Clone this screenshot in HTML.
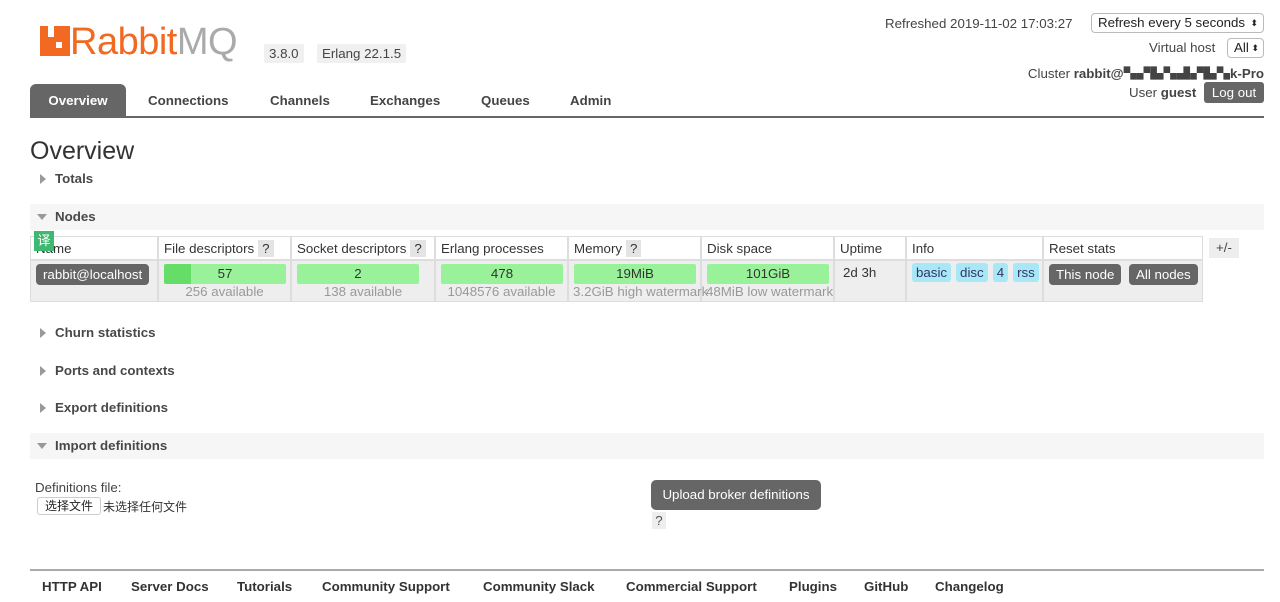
<!DOCTYPE html>
<html><head><meta charset="utf-8">
<style>
*{box-sizing:border-box;margin:0;padding:0}
body{width:1280px;height:602px;background:#fff;font-family:"Liberation Sans","Noto Sans CJK SC",sans-serif;font-size:13.3px;color:#444;position:relative;overflow:hidden}
.a{position:absolute;white-space:nowrap}
.b{font-weight:bold}
.tag{background:#f0f0f0;padding:2px 5px;border-radius:2px}
.tab{position:absolute;top:84px;height:33px;line-height:34px;font-weight:bold;color:#444}
.sec{position:absolute;left:30px;width:1234px;height:26px;line-height:26px;font-weight:bold;color:#484848;padding-left:25px}
.sec.open{background:#f6f6f6}
.tri{position:absolute;left:10px;top:8px;width:0;height:0;border-top:5px solid transparent;border-bottom:5px solid transparent;border-left:6px solid #999}
.open .tri{left:7px;top:10px;border-left:5px solid transparent;border-right:5px solid transparent;border-top:6px solid #999;border-bottom:0}
.th{position:absolute;top:236px;height:24px;line-height:24px;border:1px solid #ddd;padding-left:5px;background:#fff;color:#333;white-space:nowrap}
.td{position:absolute;top:260px;height:42px;border:1px solid #ddd;background:#eee}
.bar{position:absolute;top:3px;left:5px;height:20px;background:#99f299;text-align:center;line-height:20px;color:#333;border-radius:2px}
.sub{position:absolute;top:23px;left:0;right:0;text-align:center;color:#999;white-space:nowrap}
.q{background:#e4e4e4;padding:1px 4px;margin-left:4px}
.btn{background:#666;color:#fff;border-radius:4px;padding:3px 7px}
.pill{background:#a8e8f6;color:#336;border-radius:3px;padding:2px 4px;margin-right:5px}
</style></head><body>
<div class="a" style="left:40px;top:22px;font-size:38px;color:#f60;line-height:40px;font-family:'Liberation Sans',sans-serif;letter-spacing:-0.5px">
<span style="display:inline-block;width:30px;height:30px;background:#f26a22;vertical-align:-2px;position:relative"><span style="position:absolute;left:8px;top:0;width:6px;height:11px;background:#fff"></span><span style="position:absolute;left:16px;top:16px;width:6px;height:6px;background:#fff"></span></span><span style="color:#f26a22">Rabbit</span><span style="color:#a9aaa9">MQ</span></div>
<div class="a tag" style="left:264px;top:44px">3.8.0</div>
<div class="a tag" style="left:317px;top:44px">Erlang 22.1.5</div>

<div class="a" style="left:885px;top:16px">Refreshed 2019-11-02 17:03:27</div>
<div class="a" style="left:1091px;top:13px;width:173px;height:20px;border:1px solid #bbb;border-radius:4px;padding-left:6px;line-height:18px;color:#222">Refresh every 5 seconds<span style="position:absolute;right:5px;font-size:9px">⬍</span></div>
<div class="a" style="left:1149px;top:40px">Virtual host</div>
<div class="a" style="left:1227px;top:38px;width:37px;height:20px;border:1px solid #bbb;border-radius:4px;padding-left:6px;line-height:18px;color:#222">All<span style="position:absolute;right:4px;font-size:9px">⬍</span></div>
<div class="a" style="right:16px;top:63px">Cluster <b>rabbit@▚▞▙▚▟▞▙▚k-Pro</b></div>
<div class="a" style="left:1129px;top:85px">User <b>guest</b></div>
<div class="a" style="left:1204px;top:82px;width:60px;height:21px;background:#666;color:#fff;border-radius:3px;text-align:center;line-height:21px">Log out</div>

<div class="tab" style="left:30px;width:96px;background:#666;color:#fff;border-radius:6px 6px 0 0;text-align:center">Overview</div>
<div class="tab" style="left:148px">Connections</div>
<div class="tab" style="left:270px">Channels</div>
<div class="tab" style="left:370px">Exchanges</div>
<div class="tab" style="left:481px">Queues</div>
<div class="tab" style="left:570px">Admin</div>
<div class="a" style="left:30px;top:116px;width:1234px;height:2px;background:#666"></div>

<div class="a" style="left:30px;top:137px;font-size:25px;color:#333">Overview</div>
<div class="sec" style="top:166px"><span class="tri"></span>Totals</div>
<div class="sec open" style="top:204px"><span class="tri"></span>Nodes</div>

<div class="th" style="left:30px;width:128px">Name</div>
<div class="a" style="left:34px;top:231px;width:20px;height:20px;background:#3fb971;color:#fff;text-align:center;line-height:20px;font-size:13px">译</div>
<div class="th" style="left:158px;width:133px">File descriptors<span class="q">?</span></div>
<div class="th" style="left:291px;width:144px">Socket descriptors<span class="q">?</span></div>
<div class="th" style="left:435px;width:133px">Erlang processes</div>
<div class="th" style="left:568px;width:133px">Memory<span class="q">?</span></div>
<div class="th" style="left:701px;width:133px">Disk space</div>
<div class="th" style="left:834px;width:72px">Uptime</div>
<div class="th" style="left:906px;width:137px">Info</div>
<div class="th" style="left:1043px;width:160px">Reset stats</div>
<div class="a" style="left:1209px;top:238px;width:30px;height:20px;background:#eee;text-align:center;line-height:20px">+/-</div>

<div class="td" style="left:30px;width:128px"><span class="a btn" style="left:5px;top:3px">rabbit@localhost</span></div>
<div class="td" style="left:158px;width:133px"><div class="bar" style="width:122px;background:linear-gradient(90deg,#6d6 0 27px,#99f299 27px)">57</div><div class="sub">256 available</div></div>
<div class="td" style="left:291px;width:144px"><div class="bar" style="width:122px">2</div><div class="sub">138 available</div></div>
<div class="td" style="left:435px;width:133px"><div class="bar" style="width:122px">478</div><div class="sub">1048576 available</div></div>
<div class="td" style="left:568px;width:133px"><div class="bar" style="width:122px">19MiB</div></div>
<div class="td" style="left:701px;width:133px"><div class="bar" style="width:122px">101GiB</div></div>
<div class="a" style="top:284px;left:573px;color:#999;z-index:3">3.2GiB high watermark</div>
<div class="a" style="top:284px;left:706px;color:#999;z-index:3">48MiB low watermark</div>
<div class="td" style="left:834px;width:72px"><span class="a" style="left:8px;top:4px;color:#333">2d 3h</span></div>
<div class="td" style="left:906px;width:137px"><span class="a" style="left:5px;top:4px"><span class="pill">basic</span><span class="pill">disc</span><span class="pill">4</span><span class="pill">rss</span></span></div>
<div class="td" style="left:1043px;width:160px"><span class="a btn" style="left:5px;top:3px">This node</span><span class="a btn" style="left:85px;top:3px">All nodes</span></div>

<div class="sec" style="top:320px"><span class="tri"></span>Churn statistics</div>
<div class="sec" style="top:358px"><span class="tri"></span>Ports and contexts</div>
<div class="sec" style="top:395px"><span class="tri"></span>Export definitions</div>
<div class="sec open" style="top:433px"><span class="tri"></span>Import definitions</div>

<div class="a" style="left:35px;top:480px">Definitions file:</div>
<div class="a" style="left:37px;top:497px;border:1px solid #ccc;border-radius:3px;padding:0 7px;height:18px;line-height:17px;font-size:12px;color:#222">选择文件</div>
<div class="a" style="left:103px;top:498px;font-size:12px;color:#333">未选择任何文件</div>
<div class="a" style="left:651px;top:480px;width:170px;height:30px;background:#666;color:#fff;border-radius:5px;text-align:center;line-height:30px">Upload broker definitions</div>
<div class="a" style="left:652px;top:512px;width:14px;height:17px;background:#eee;text-align:center;line-height:17px;color:#555">?</div>

<div class="a" style="left:30px;top:569px;width:1234px;height:2px;background:#aaa"></div>
<div class="a b" style="left:42px;top:579px;color:#333">HTTP API</div>
<div class="a b" style="left:131px;top:579px;color:#333">Server Docs</div>
<div class="a b" style="left:237px;top:579px;color:#333">Tutorials</div>
<div class="a b" style="left:322px;top:579px;color:#333">Community Support</div>
<div class="a b" style="left:483px;top:579px;color:#333">Community Slack</div>
<div class="a b" style="left:626px;top:579px;color:#333">Commercial Support</div>
<div class="a b" style="left:789px;top:579px;color:#333">Plugins</div>
<div class="a b" style="left:864px;top:579px;color:#333">GitHub</div>
<div class="a b" style="left:935px;top:579px;color:#333">Changelog</div>
</body></html>
